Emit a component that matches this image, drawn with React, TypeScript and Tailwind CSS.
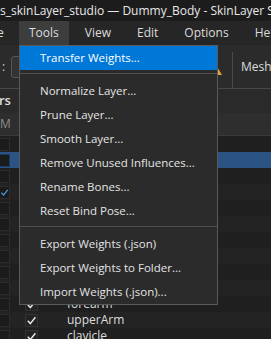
import type { ReactNode } from 'react'

const FONT = { fontFamily: '"Open Sans", "Noto Sans", sans-serif' }

const MENU_ITEMS: (string | null)[] = [
  'Transfer Weights...',
  null,
  'Normalize Layer...',
  'Prune Layer...',
  'Smooth Layer...',
  'Remove Unused Influences...',
  'Rename Bones...',
  'Reset Bind Pose...',
  null,
  'Export Weights (.json)',
  'Export Weights to Folder...',
  'Import Weights (.json)...',
]

const BONES = [
  'root',
  'pelvis',
  'spine',
  'spine1',
  'spine2',
  'neck',
  'head',
  'hand',
  'thigh',
  'calf',
  'forearm',
  'upperArm',
  'clavicle',
]

function Check({ color }: { color: string }) {
  return (
    <svg width="11" height="11" viewBox="0 0 11 11" fill="none">
      <path d="M1.8 5.8 L4.3 8.6 L9.4 2.2" stroke={color} strokeWidth="1.5" />
    </svg>
  )
}

function MenuBarItem({ children, active }: { children: ReactNode; active?: boolean }) {
  return (
    <div
      className={`h-full flex items-center px-[10px] ${active ? 'bg-[#3d3d3d]' : ''}`}
    >
      {children}
    </div>
  )
}

function BoneRow({ name, index }: { name: string; index: number }) {
  const selected = index === 1
  const bg = selected ? 'bg-[#2b5384]' : index % 2 === 0 ? 'bg-[#1f1f1f]' : 'bg-[#232323]'
  return (
    <div className={`h-[16px] flex items-center ${bg}`}>
      <div
        className={`w-[10px] h-[13px] flex items-center justify-end border border-l-0 ${
          selected ? 'border-[#1c3a5e] bg-[#1b1b1b]' : 'border-[#2c2c2c] bg-[#1b1b1b]'
        }`}
      >
        {index === 3 && <Check color="#4b9be6" />}
      </div>
      <div className="ml-[15px] w-[13px] h-[13px] flex items-center justify-center border border-[#333] bg-[#222]">
        <Check color="#e8e8e8" />
      </div>
      <span className="ml-[29px] text-[12px] text-[#dedede] leading-none">{name}</span>
    </div>
  )
}

export default function App() {
  return (
    <div
      className="relative w-[271px] h-[339px] overflow-hidden bg-[#1e1e1e] text-[#e6e6e6]"
      style={FONT}
    >
      {/* title bar */}
      <div className="h-[21px] bg-[#1c1c1c] flex items-center whitespace-nowrap text-[12px] text-[#e8e8e8]">
        s_skinLayer_studio — Dummy_Body - SkinLayer Studio
      </div>

      {/* menu bar */}
      <div className="h-[24px] bg-[#262626] flex items-center whitespace-nowrap text-[12px] text-[#dcdcdc]">
        <div className="w-[22px] -ml-[3px] shrink-0">e</div>
        <MenuBarItem active>Tools</MenuBarItem>
        <div className="w-[6px] shrink-0" />
        <MenuBarItem>View</MenuBarItem>
        <div className="w-[6px] shrink-0" />
        <MenuBarItem>Edit</MenuBarItem>
        <div className="w-[6px] shrink-0" />
        <MenuBarItem>Options</MenuBarItem>
        <div className="w-[6px] shrink-0" />
        <MenuBarItem>Help</MenuBarItem>
      </div>

      {/* toolbar */}
      <div className="h-[44px] bg-[#2b2b2b] border-b border-[#474747] flex items-center whitespace-nowrap">
        <div className="w-[210px] shrink-0 flex items-center">
          <span className="ml-[2px] text-[12px] text-[#cfcfcf]">:</span>
          <div className="ml-[6px] w-[120px] h-[22px] rounded-[3px] border border-[#555] bg-[#333]" />
        </div>
        <svg width="12" height="10" viewBox="0 0 12 10" className="shrink-0 mt-[6px]">
          <path d="M6 0 L12 10 L0 10 Z" fill="#e8a33a" />
        </svg>
        <div className="shrink-0 ml-[10px] w-px h-[36px] self-end bg-[#4a4a4a]" />
        <span className="shrink-0 ml-[8px] text-[12px] text-[#dcdcdc]">Mesh Tools</span>
      </div>

      {/* panel header */}
      <div className="h-[24px] bg-[#2a2a2a] flex items-center">
        <span className="-ml-[1px] text-[13px] font-semibold text-[#dedede]">rs</span>
      </div>
      <div className="h-[23px] bg-[#2e2e2e] border-b border-[#3a3a3a] flex items-center">
        <span className="text-[12px] text-[#8c8c8c]">M</span>
      </div>

      {/* rows */}
      <div className="flex flex-col">
        {BONES.map((b, i) => (
          <BoneRow key={b} name={b} index={i} />
        ))}
      </div>

      {/* dropdown menu */}
      <div className="absolute left-[19px] top-[45px] w-[199px] bg-[#2b2b2b] border border-[#5a5a5a] text-[11.5px] text-[#e4e4e4] whitespace-nowrap">
        {MENU_ITEMS.map((item, i) =>
          item === null ? (
            <div key={i} className="h-[9px] pt-[3px]">
              <div className="h-px bg-[#4f4f4f]" />
            </div>
          ) : (
            <div
              key={i}
              className={`h-[24px] flex items-center pl-[20px] ${i === 0 ? 'bg-[#0078d7] text-white' : ''}`}
            >
              {item}
            </div>
          ),
        )}
      </div>
    </div>
  )
}
